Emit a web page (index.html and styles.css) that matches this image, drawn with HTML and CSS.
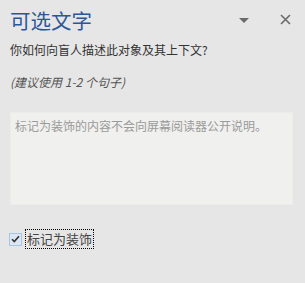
FILE: index.html
```html
<!DOCTYPE html>
<html lang="zh-CN">
<head>
<meta charset="utf-8">
<link rel="stylesheet" href="styles.css">
</head>
<body>
<div class="pane">
  <div class="header">
    <h1 class="title">可选文字</h1>
    <div class="actions">
      <svg class="caret" width="10" height="5" viewBox="0 0 10 5"><path d="M0 0h10L5 5z" fill="#6a6a6a"/></svg>
      <svg class="close" width="11" height="11" viewBox="0 0 11 11"><path d="M1 1l9 9M10 1l-9 9" stroke="#6a6a6a" stroke-width="1.6"/></svg>
    </div>
  </div>
  <p class="question">你如何向盲人描述此对象及其上下文?</p>
  <p class="hint">(建议使用 1-2 个句子)</p>
  <div class="textbox"><span class="placeholder">标记为装饰的内容不会向屏幕阅读器公开说明。</span></div>
  <label class="check">
    <span class="box"><svg width="9" height="8" viewBox="0 0 9 8"><path d="M1 4.2l2.3 2.3L8 1.2" fill="none" stroke="#333" stroke-width="1.6"/></svg></span>
    <span class="label">标记为装饰</span>
  </label>
</div>
</body>
</html>
```
FILE: styles.css
```css
html, body {
  margin: 0;
  padding: 0;
  background: #e6e6e6;
}
body {
  width: 305px;
  height: 283px;
  overflow: hidden;
  font-family: "Noto Sans CJK SC", "Noto Sans", sans-serif;
}
.pane {
  padding: 0 14px 0 10px;
}
.header {
  display: flex;
  justify-content: space-between;
  align-items: center;
  height: 40px;
}
.title {
  margin: 0;
  font-weight: normal;
  font-size: 20.5px;
  line-height: 40px;
  color: #2b579a;
}
.actions {
  display: flex;
  align-items: center;
  gap: 31px;
}
.caret { display: block; }
.close { display: block; margin-top: -2px; }
.question {
  margin: 0;
  font-size: 12px;
  line-height: 16px;
  color: #333;
  padding-top: 2px;
}
.hint {
  margin: 0;
  padding-top: 16px;
  font-size: 12px;
  line-height: 16px;
  font-style: italic;
  color: #555;
}
.textbox {
  margin-top: 22px;
  width: 281px;
  height: 91px;
  background: #f0f0ee;
  border: 1px solid #ececea;
}
.placeholder {
  display: block;
  padding: 5px 0 0 4px;
  font-size: 12px;
  line-height: 16px;
  color: #9a9a9a;
}
.check {
  display: flex;
  align-items: center;
  margin-top: 25px;
  margin-left: -1px;
}
.box {
  width: 11px;
  height: 11px;
  border: 1px solid #a6c3e8;
  background: #dce6f4;
  display: flex;
  align-items: center;
  justify-content: center;
}
.label {
  margin-left: 4px;
  padding: 1px 1px;
  font-size: 13px;
  line-height: 16px;
  color: #444;
  outline: 1px dotted #000;
}
```
